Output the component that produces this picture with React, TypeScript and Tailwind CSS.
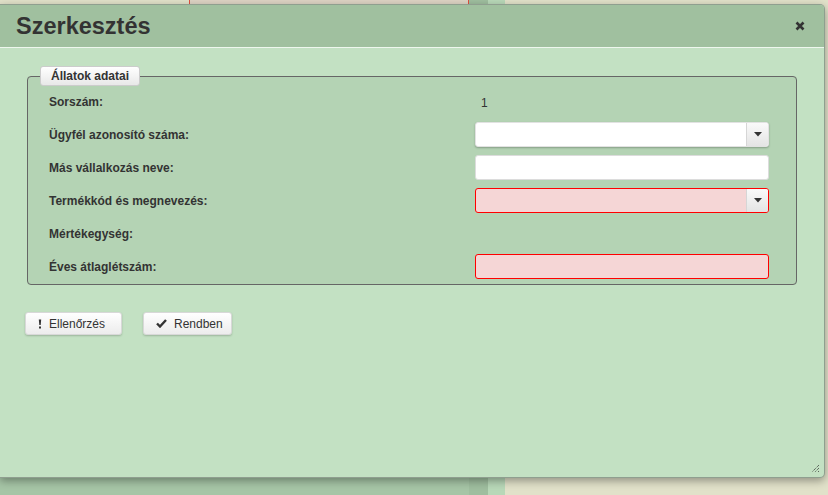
import React from "react";

function Caret() {
  return (
    <svg width="8" height="5" viewBox="0 0 8 5" className="block">
      <path d="M0 0 H8 L4 4.5 Z" fill="#333" />
    </svg>
  );
}

function SelectBox({ error }: { error?: boolean }) {
  return (
    <div
      className={
        "relative h-[25px] w-[294px] rounded-[3px] border " +
        (error
          ? "border-[#ff0000] bg-[#f5d6d6]"
          : "border-[#e2e2e2] bg-white shadow-[0_1px_2px_rgba(0,0,0,0.25)]")
      }
    >
      <div className="absolute right-0 top-0 bottom-0 flex w-[22px] items-center justify-center rounded-r-[2px] border-l border-[#d6d6d6] bg-gradient-to-b from-[#fafafa] to-[#e4e4e4]">
        <Caret />
      </div>
    </div>
  );
}

function TextBox({ error }: { error?: boolean }) {
  return (
    <div
      className={
        "h-[25px] w-[294px] rounded-[3px] border " +
        (error ? "border-[#ff0000] bg-[#f5d6d6]" : "border-[#dcdcdc] bg-white")
      }
    />
  );
}

function Row({ label, children }: { label: string; children?: React.ReactNode }) {
  return (
    <div className="flex h-[33px] items-center">
      <div className="w-[447px] pl-[21px] text-[12px] font-bold text-[#333]">{label}</div>
      <div>{children}</div>
    </div>
  );
}

function Button({ icon, text, width }: { icon: React.ReactNode; text: string; width: string }) {
  return (
    <button
      className={
        "flex h-[23px] items-center gap-[7px] rounded-[3px] border border-[#d8d8d8] bg-gradient-to-b from-white to-[#ececec] pl-[12px] text-[12px] text-[#333] shadow-[0_1px_2px_rgba(0,0,0,0.2)] " +
        width
      }
    >
      {icon}
      <span>{text}</span>
    </button>
  );
}

export default function App() {
  return (
    <div
      className="relative h-[495px] w-[828px] overflow-hidden"
      style={{ fontFamily: '"Liberation Sans", Arial, sans-serif' }}
    >
      {/* page behind the dialog */}
      <div className="flex h-full w-full">
        <div className="flex w-[469px] flex-col">
          <div className="flex h-[5px]">
            <div className="w-[189px] bg-[#e1e1c9]" />
            <div className="w-[1px] bg-[#e05040]" />
            <div className="flex-1 bg-[#ddd3c3]" />
            <div className="w-[1px] bg-[#e05040]" />
          </div>
          <div className="flex-1 bg-[#a6c5a6]" />
        </div>
        <div className="w-[19px] bg-[#9fbe9f]" />
        <div className="w-[17px] bg-[#b8d8b8]" />
        <div className="flex-1 bg-[#e1e1c9]" />
      </div>

      {/* dialog */}
      <div className="absolute left-0 top-[4px] flex h-[474px] w-[825px] flex-col overflow-hidden rounded-r-[5px] border-r border-t border-b border-[#8f9f8f] bg-[#c3e1c3] shadow-[0_3px_8px_rgba(0,0,0,0.35)]">
        <div className="flex h-[43px] shrink-0 items-center justify-between border-b border-[#eef7ee] bg-[#a0c09f] pl-[16px] pr-[19px]">
          <div className="pt-[2px] text-[23.5px] font-bold text-[#333]">Szerkesztés</div>
          <svg width="10" height="10" viewBox="0 0 10 10">
            <path d="M1.5 1.5 L8.5 8.5 M8.5 1.5 L1.5 8.5" stroke="#333" strokeWidth="2.6" />
          </svg>
        </div>

        <div className="flex-1 pl-[27px] pt-[18px]">
          <fieldset className="w-[770px] rounded-[4px] border border-[#666] bg-[#b4d3b4] pb-[1px]">
            <legend className="ml-[12px] h-[20px] rounded-[3px] border border-[#ccc] bg-gradient-to-b from-white to-[#e8e8e8] px-[10px] text-[12px] font-bold leading-[18px] text-[#333]">
              Állatok adatai
            </legend>
            <div className="-mt-[1px]">
              <Row label="Sorszám:">
                <span className="pl-[6px] text-[12px] text-[#333]">1</span>
              </Row>
              <Row label="Ügyfél azonosító száma:">
                <SelectBox />
              </Row>
              <Row label="Más vállalkozás neve:">
                <TextBox />
              </Row>
              <Row label="Termékkód és megnevezés:">
                <SelectBox error />
              </Row>
              <Row label="Mértékegység:" />
              <Row label="Éves átlaglétszám:">
                <TextBox error />
              </Row>
            </div>
          </fieldset>

          <div className="-ml-[2px] mt-[27px] flex gap-[21px]">
            <Button
              width="w-[97px]"
              text="Ellenőrzés"
              icon={
                <svg width="4" height="10" viewBox="0 0 4 10">
                  <path d="M0.8 0.5 H3.2 L2.7 6 H1.3 Z M1 7.5 H3 V9.5 H1 Z" fill="#333" />
                </svg>
              }
            />
            <Button
              width="w-[89px]"
              text="Rendben"
              icon={
                <svg width="11" height="9" viewBox="0 0 11 9">
                  <path d="M1 4.5 L4 7.5 L10 1" stroke="#333" strokeWidth="2.4" fill="none" />
                </svg>
              }
            />
          </div>
        </div>

        <div className="absolute bottom-[4px] right-[4px]">
          <svg width="9" height="9" viewBox="0 0 9 9">
            <path d="M8 1 L1 8 M8 4 L4 8 M8 7 L7 8" stroke="#333" strokeWidth="1" strokeDasharray="1 1" />
          </svg>
        </div>
      </div>
    </div>
  );
}
